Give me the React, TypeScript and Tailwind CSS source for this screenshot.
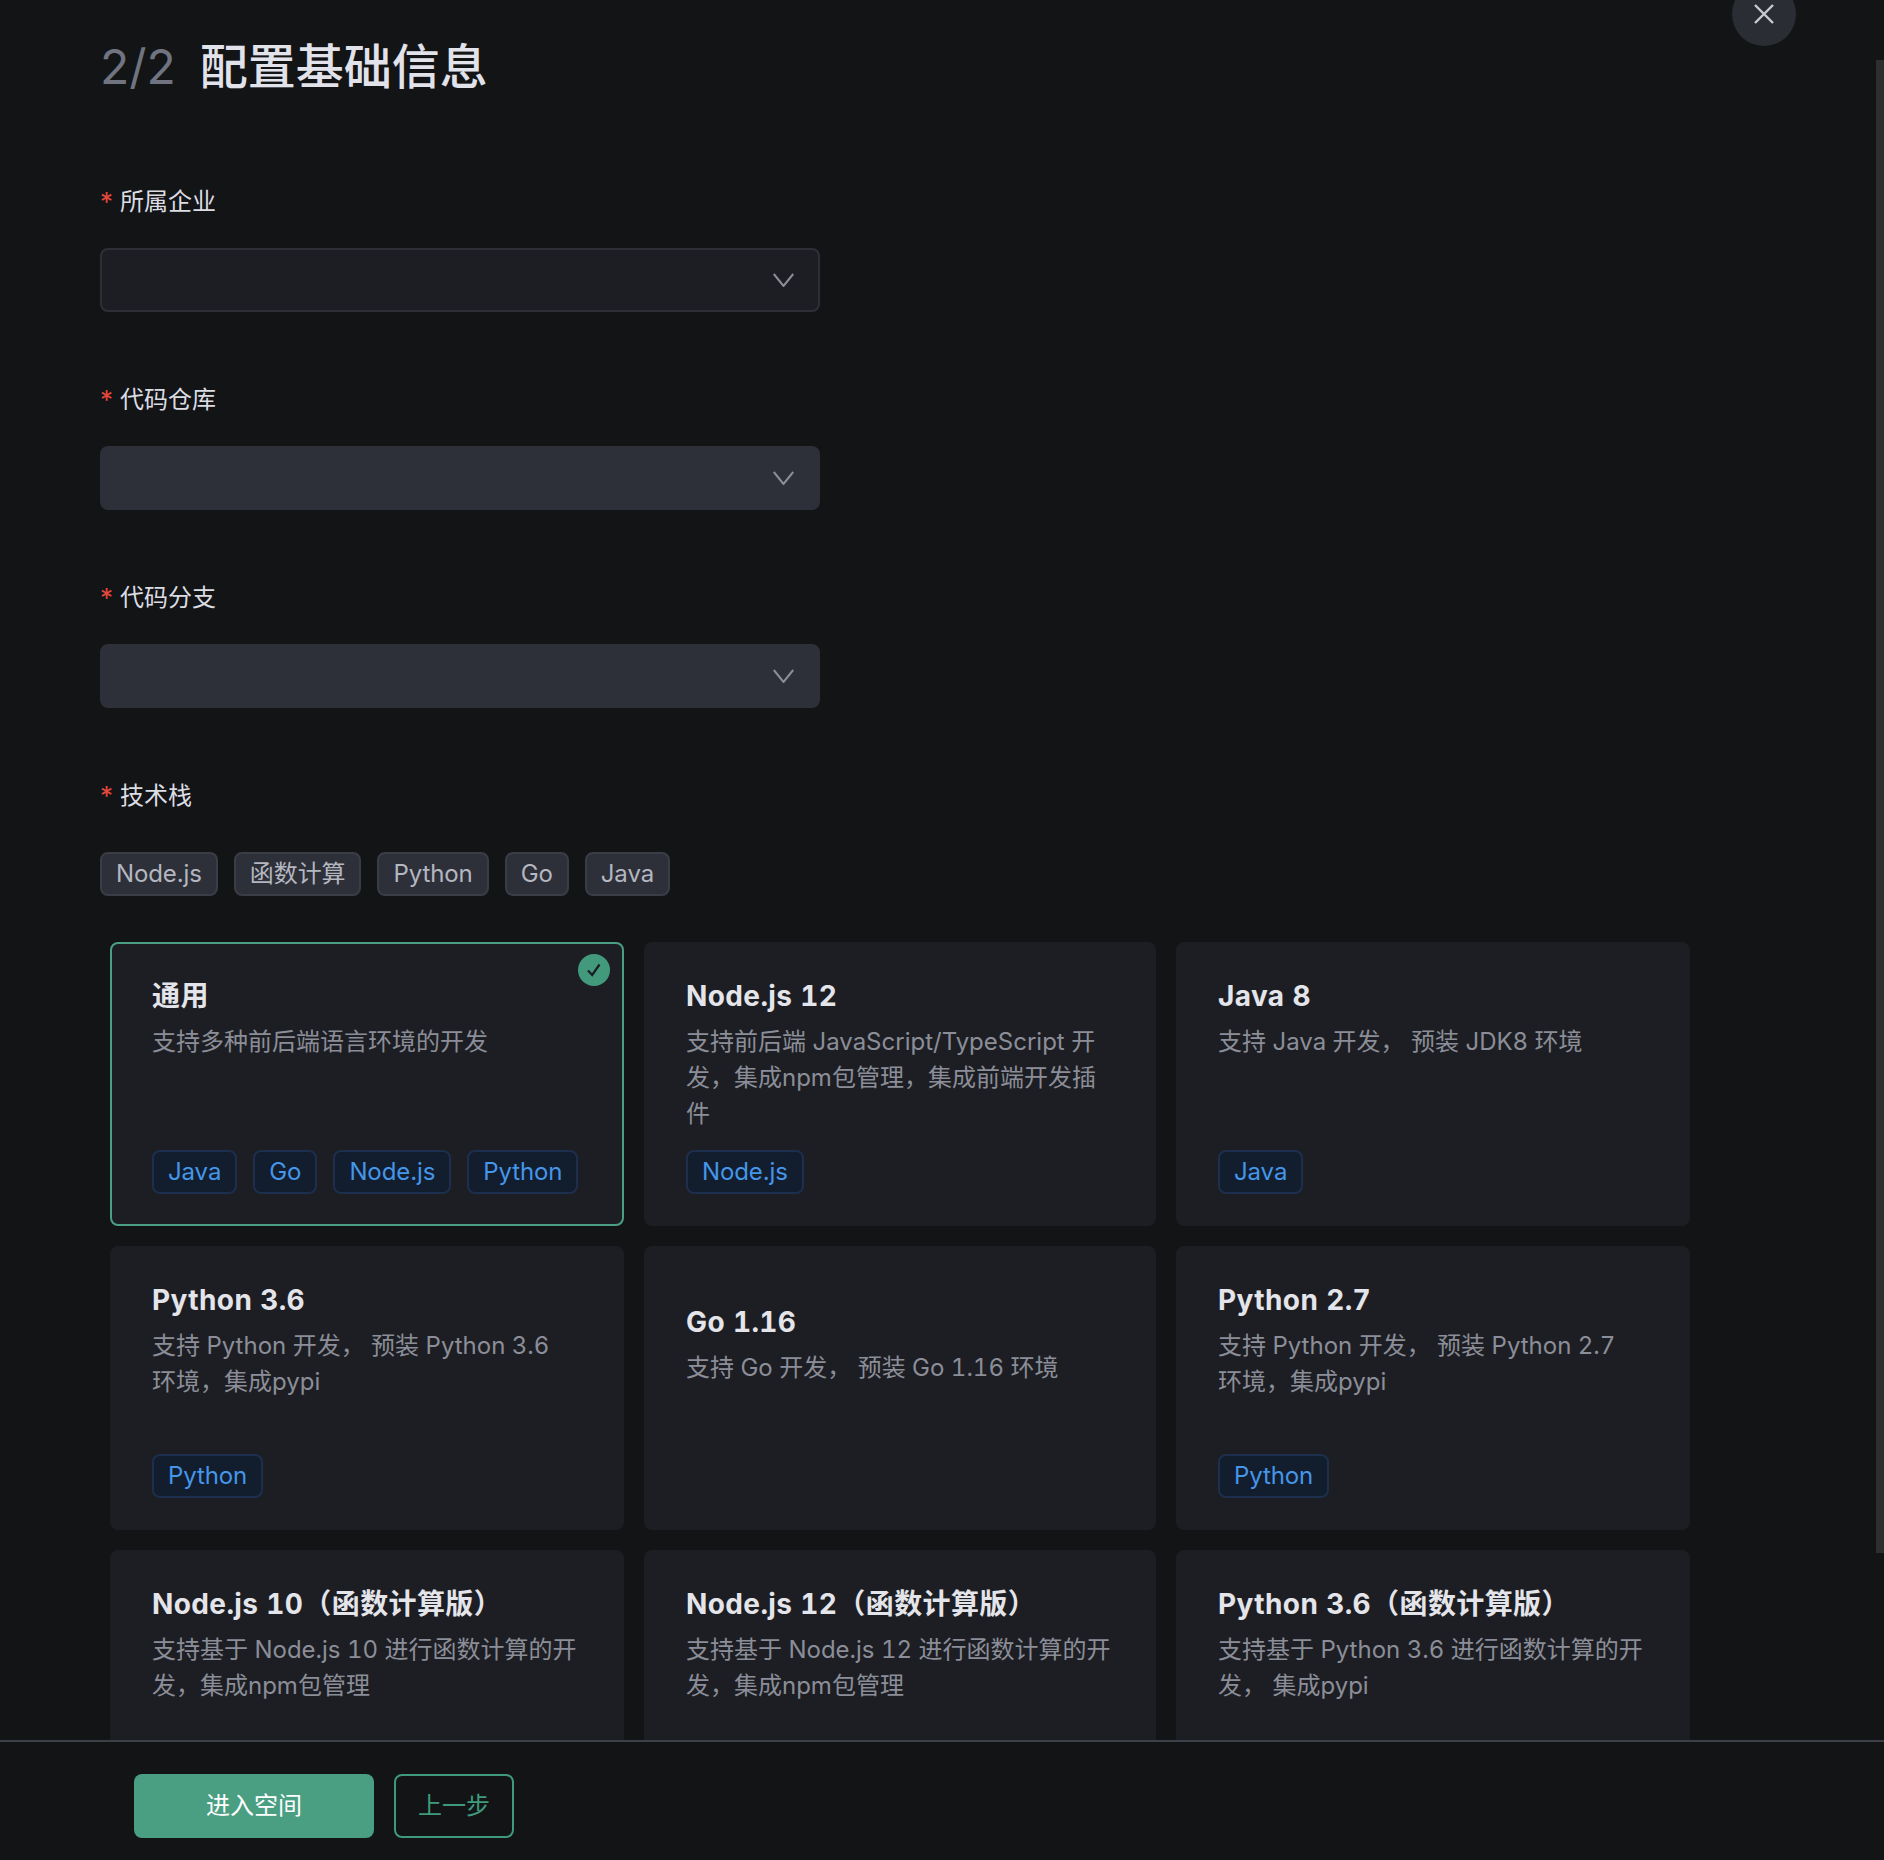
const FONT = 'font-["Inter","Noto_Sans_CJK_SC",sans-serif]';

interface Env {
  title: string;
  desc: string;
  tags: string[];
  selected?: boolean;
  keepRow?: boolean; // tag row is under the footer, only its height matters
}

const FIELDS = [
  { label: '所属企业', active: true },
  { label: '代码仓库', active: false },
  { label: '代码分支', active: false },
];

const STACKS = ['Node.js', '函数计算', 'Python', 'Go', 'Java'];

const ENVS: Env[] = [
  { title: '通用', desc: '支持多种前后端语言环境的开发', tags: ['Java', 'Go', 'Node.js', 'Python'], selected: true },
  { title: 'Node.js 12', desc: '支持前后端 JavaScript/TypeScript 开发，集成npm包管理，集成前端开发插件', tags: ['Node.js'] },
  { title: 'Java 8', desc: '支持 Java 开发， 预装 JDK8 环境', tags: ['Java'] },
  { title: 'Python 3.6', desc: '支持 Python 开发， 预装 Python 3.6\n环境，集成pypi', tags: ['Python'] },
  { title: 'Go 1.16', desc: '支持 Go 开发， 预装 Go 1.16 环境', tags: [] },
  { title: 'Python 2.7', desc: '支持 Python 开发， 预装 Python 2.7\n环境，集成pypi', tags: ['Python'] },
  { title: 'Node.js 10（函数计算版）', desc: '支持基于 Node.js 10 进行函数计算的开发，集成npm包管理', tags: [], keepRow: true },
  { title: 'Node.js 12（函数计算版）', desc: '支持基于 Node.js 12 进行函数计算的开发，集成npm包管理', tags: [], keepRow: true },
  { title: 'Python 3.6（函数计算版）', desc: '支持基于 Python 3.6 进行函数计算的开发， 集成pypi', tags: [], keepRow: true },
];

function FieldLabel({ children }: { children: string }) {
  return (
    <div className="flex h-9 items-center text-2xl leading-9 text-[#dcdde3]">
      <span className="w-5 text-[26px] leading-9 text-[#e5483d]">*</span>
      {children}
    </div>
  );
}

function Chevron() {
  return (
    <svg width="21" height="14" viewBox="0 0 21 14" fill="none" stroke="#8b8e98" strokeWidth="2">
      <path d="M0.8 1 10.5 13 20.2 1" />
    </svg>
  );
}

function SelectBox({ active }: { active: boolean }) {
  return (
    <div
      className={`mt-[28px] flex h-16 w-[720px] items-center justify-end rounded-lg border-2 pr-[24px] ${
        active ? 'border-[#2d2f36] bg-[#1d1e23]' : 'border-[#2d3038] bg-[#2d3038]'
      }`}
    >
      <Chevron />
    </div>
  );
}

function EnvCard({ env }: { env: Env }) {
  return (
    <div
      className={`relative flex h-[284px] flex-col justify-center rounded-lg border-2 bg-[#1d1e23] pl-10 pr-[42px] pt-[2px] ${
        env.selected ? 'border-[#4a9e82]' : 'border-[#1d1e23]'
      }`}
    >
      {env.selected && (
        <span className="absolute right-[12px] top-[10px] flex h-8 w-8 items-center justify-center rounded-full bg-[#42997b]">
          <svg width="20" height="20" viewBox="0 0 20 20" fill="none" stroke="#1d1e23" strokeWidth="2.2">
            <path d="M4 10.5 8.2 15 15.5 4.5" />
          </svg>
        </span>
      )}
      <div className="h-10 whitespace-nowrap text-[28px] font-bold leading-10 tracking-[0.4px] text-[#e4e5ea] tabular-nums">{env.title}</div>
      <div className="mt-[8px] min-h-[108px] whitespace-pre-line text-2xl leading-9 text-[#8b8e98] tabular-nums">{env.desc}</div>
      <div className={`mt-[18px] flex gap-4 ${env.keepRow ? 'h-11' : ''}`}>
        {env.tags.map((t) => (
          <span key={t} className="flex h-11 items-center rounded-lg border-2 border-[#1c2f4c] bg-[#121d2e] px-3.5 text-2xl tracking-[-0.1px] text-[#4596e8]">
            {t}
          </span>
        ))}
      </div>
    </div>
  );
}

export default function App() {
  return (
    <div className={`${FONT} relative flex h-[1860px] flex-col overflow-hidden bg-[#131416]`}>
      <main className="min-h-0 flex-1 overflow-hidden pl-[100px] pt-[31px]">
        <h1 className="flex h-[72px] items-center gap-6 text-5xl font-medium leading-[72px]">
          <span className="font-normal text-[#6f7480]">2/2</span>
          <span className="text-[#e2e2ea]">配置基础信息</span>
        </h1>

        <div className="mt-[81px]">
          {FIELDS.map((f) => (
            <div key={f.label} className="mb-[70px]">
              <FieldLabel>{f.label}</FieldLabel>
              <SelectBox active={f.active} />
            </div>
          ))}
          <FieldLabel>技术栈</FieldLabel>
        </div>

        <div className="mt-[38px] flex gap-4">
          {STACKS.map((s) => (
            <span key={s} className="flex h-11 items-center rounded-lg border-2 border-[#3a3d46] bg-[#2d3038] px-3.5 text-2xl tracking-[-0.1px] text-[#b4b6c0]">
              {s}
            </span>
          ))}
        </div>

        <div className="ml-[10px] mt-[46px] grid w-[1580px] grid-cols-[514px_512px_514px] gap-5">
          {ENVS.map((e) => (
            <EnvCard key={e.title} env={e} />
          ))}
        </div>
      </main>

      <footer className="relative flex h-[120px] shrink-0 items-start gap-5 border-t-2 border-[#3c4049] bg-[#131416] pl-[134px] pt-8">
        <button className="h-16 w-60 rounded-lg bg-[#4a9e82] text-2xl text-white">进入空间</button>
        <button className="h-16 w-[120px] rounded-lg border-2 border-[#3f9a7d] text-2xl text-[#3f9a7d]">上一步</button>
      </footer>

      <button className="absolute right-[88px] top-[-18px] flex h-16 w-16 items-center justify-center rounded-full bg-[#2a2d33]">
        <svg width="22" height="22" viewBox="0 0 22 22" fill="none" stroke="#c9cad2" strokeWidth="2.4">
          <path d="M2 2 20 20M20 2 2 20" />
        </svg>
      </button>

      <div className="absolute right-0 top-[60px] h-[1493px] w-2 bg-[#2d2e30]" />
    </div>
  );
}
